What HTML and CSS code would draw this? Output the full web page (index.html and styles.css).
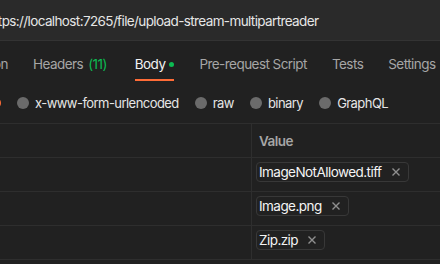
FILE: index.html
```html
<!DOCTYPE html>
<html lang="en">
<head>
  <meta charset="UTF-8">
  <title>Body - upload-stream-multipartreader</title>
  <link rel="stylesheet" href="styles.css">
</head>
<body>

  <div class="url-bar">
    <span class="url-text">https://localhost:7265/file/upload-stream-multipartreader</span>
  </div>

  <nav class="tabs">
    <span class="tab tab-cut">Authorization</span>
    <span class="tab">Headers <span class="count">(11)</span></span>
    <span class="tab active">Body <span class="dot"></span></span>
    <span class="tab">Pre-request Script</span>
    <span class="tab">Tests</span>
    <span class="tab">Settings</span>
  </nav>

  <div class="body-types">
    <span class="radio checked"></span>
    <label class="option"><span class="radio"></span>x-www-form-urlencoded</label>
    <label class="option"><span class="radio"></span>raw</label>
    <label class="option"><span class="radio"></span>binary</label>
    <label class="option"><span class="radio"></span>GraphQL</label>
  </div>

  <table class="params">
    <thead>
      <tr>
        <th class="key"></th>
        <th>Value</th>
      </tr>
    </thead>
    <tbody>
      <tr>
        <td class="key"></td>
        <td>
          <span class="chip">ImageNotAllowed.tiff
            <svg class="remove" width="8" height="8" viewBox="0 0 8 8"><path d="M0.5 0.5L7.5 7.5M7.5 0.5L0.5 7.5"/></svg>
          </span>
        </td>
      </tr>
      <tr>
        <td class="key"></td>
        <td>
          <span class="chip">Image.png
            <svg class="remove" width="8" height="8" viewBox="0 0 8 8"><path d="M0.5 0.5L7.5 7.5M7.5 0.5L0.5 7.5"/></svg>
          </span>
        </td>
      </tr>
      <tr>
        <td class="key"></td>
        <td>
          <span class="chip">Zip.zip
            <svg class="remove" width="8" height="8" viewBox="0 0 8 8"><path d="M0.5 0.5L7.5 7.5M7.5 0.5L0.5 7.5"/></svg>
          </span>
        </td>
      </tr>
    </tbody>
  </table>

</body>
</html>
```

FILE: styles.css
```css
body {
  font-family: 'Inter', 'Noto Sans', sans-serif;
  font-size: 13.5px;
  letter-spacing: -0.55px;
  margin: 0;
  padding: 0;
  background-color: #212121;
  color: #e6e6e6;
  overflow: hidden;
}

.url-bar {
  height: 39px;
  background-color: #2a2a2a;
  border-bottom: 1px solid #333;
  display: flex;
  align-items: center;
  white-space: nowrap;
  overflow: hidden;
  padding-top: 1px;
}

.url-text {
  margin-left: -13px;
  letter-spacing: -0.62px;
  color: #e6e6e6;
}

.tabs {
  height: 40px;
  display: flex;
  align-items: stretch;
  gap: 25px;
  margin-left: -70px;
  white-space: nowrap;
  overflow: hidden;
}

.tab {
  display: flex;
  align-items: center;
  gap: 5px;
  color: #a6a6a6;
  border-bottom: 2px solid transparent;
  padding-top: 8px;
}

.tab.active {
  color: #f2f2f2;
  border-bottom-color: #ff6c37;
  margin-left: 3px;
  gap: 4px;
}

.count {
  color: #0cbb52;
}

.dot {
  width: 5px;
  height: 5px;
  border-radius: 50%;
  background-color: #0cbb52;
}

.body-types {
  height: 40px;
  padding-top: 2px;
  display: flex;
  align-items: center;
  gap: 16px;
  font-size: 13px;
  white-space: nowrap;
  overflow: hidden;
  border-bottom: 1px solid #2e2e2e;
}

.option {
  display: flex;
  align-items: center;
  gap: 6px;
}

.radio {
  width: 12px;
  height: 12px;
  border-radius: 50%;
  background-color: #6b6b6b;
}

.radio.checked {
  box-sizing: border-box;
  background-color: transparent;
  border: 3px solid #ff6c37;
  margin-left: -11px;
}

.params {
  width: 100%;
  border-collapse: collapse;
}

.params th,
.params td {
  height: 33px;
  padding: 0 4px;
  border-bottom: 1px solid #2e2e2e;
  text-align: left;
}

.params td {
  vertical-align: top;
  padding-top: 4px;
  height: 29px;
}

.params th {
  color: #a6a6a6;
  font-weight: 600;
  padding-left: 7px;
}

.params .key {
  width: 245px;
  padding: 0 3px;
  border-right: 1px solid #2e2e2e;
}

.chip {
  display: inline-flex;
  align-items: center;
  gap: 10px;
  height: 18px;
  padding: 0 8px 0 2px;
  border: 1px solid #383838;
  border-radius: 4px;
  color: #f4f4f4;
}

.remove {
  stroke: #8f8f8f;
  stroke-width: 1.4;
  fill: none;
}
```
